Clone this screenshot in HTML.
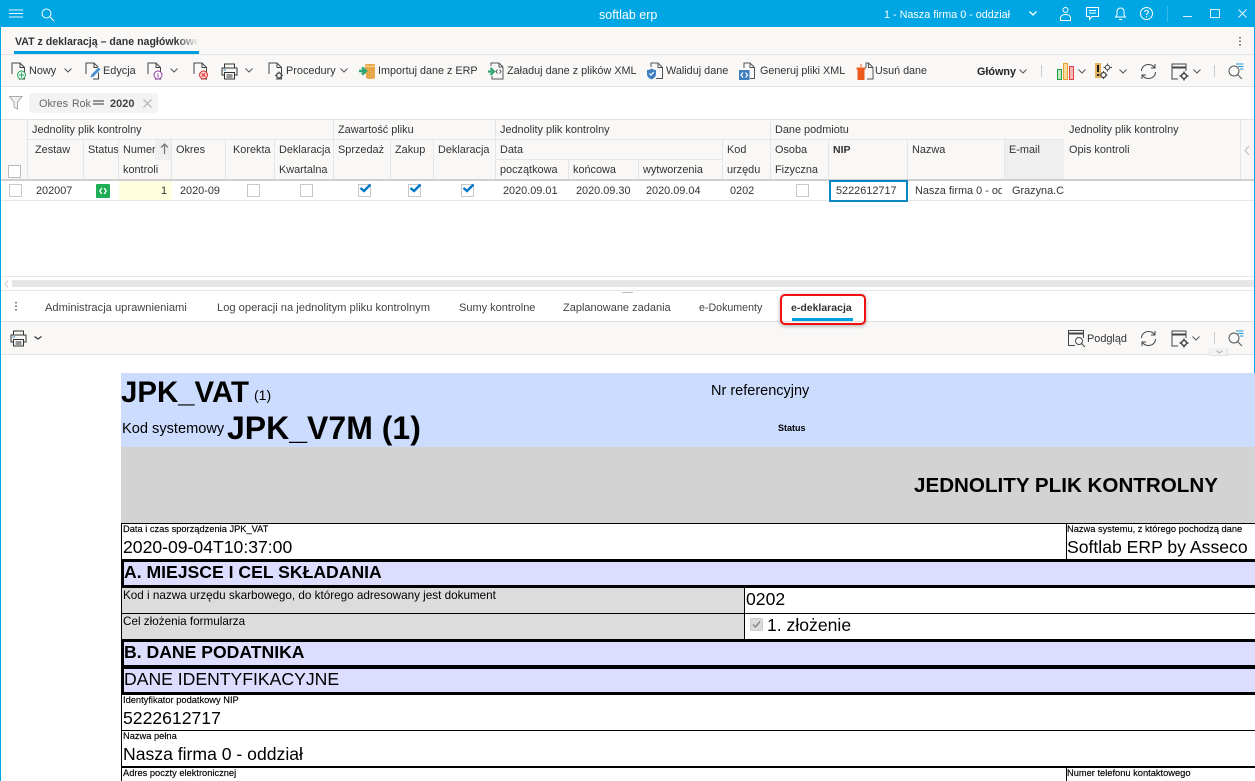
<!DOCTYPE html>
<html lang="pl"><head><meta charset="utf-8"><title>softlab erp</title>
<style>
html,body{margin:0;padding:0;width:1255px;height:781px;overflow:hidden;background:#fff}
body{position:relative;font-family:"Liberation Sans",sans-serif;font-size:10.900px;color:#333}
.a,.t,.x,svg{position:absolute}
.t{white-space:nowrap;line-height:14px;margin-top:1px}
.x{white-space:nowrap;font-family:"Liberation Sans",sans-serif;color:#000}
.s{font-size:9.300px;line-height:11px;-webkit-text-stroke:.15px #000}
.v{font-size:17.600px;line-height:21px}
.h{font-size:11.150px;color:#444;top:0}
.cb{position:absolute;width:11px;height:11px;border:1px solid #c8c8c8;background:#fff}
.tick{position:absolute;width:11px;height:11px;border:1px solid #c8c8c8;background:#fff}
.tick svg{left:0;top:-3px}
svg{overflow:visible;fill:none}
.vl{position:absolute;width:1px;background:#e6e6e6}
.hl{position:absolute;height:1px;background:#e6e6e6}
.bk{position:absolute;background:#000}
</style></head><body>

<svg width="0" height="0" style="position:absolute">
<defs>
<symbol id="doc" viewBox="0 0 16 18" overflow="visible"><path d="M1 12V1H9L13.5 5.5V17H8M9 1V5.5H13.5" stroke="#444" fill="none"/></symbol>
<symbol id="chev" viewBox="0 0 8 5" overflow="visible"><path d="M.5.5L4 4L7.500.5" stroke="#555" fill="none"/></symbol>
<symbol id="prn" viewBox="0 0 17 17" overflow="visible"><path d="M3.500 5V1H13.500V5M3.500 12H1V5H16V12H13.500M3.500 9.500H13.500V16H3.500Z" stroke="#333" fill="none"/><path d="M5.500 12H11.500M5.500 14H11.500" stroke="#333"/><path d="M2.500 7H5" stroke="#1e88c9"/></symbol>
<symbol id="ref" viewBox="0 0 17 17" overflow="visible"><path d="M1.500 8C1.500 4 5 1.500 8.500 1.500C11 1.500 13 2.500 14.500 4.500M15.500 9C15.500 13 12 15.500 8.500 15.500C6 15.500 4 14.500 2.500 12.500" stroke="#444" fill="none"/><path d="M15 1V5H11M2 16V12H6" stroke="#444" fill="none"/></symbol>
<symbol id="win" viewBox="0 0 20 18" overflow="visible"><path d="M7 16H1V1H15V8" stroke="#444" fill="none"/><path d="M1 4.500H15" stroke="#444" stroke-width="2"/><circle cx="13" cy="13" r="2.500" stroke="#444" stroke-width="1.500" fill="none"/><path d="M13 8.500V10M13 16V17.500M8.500 13H10M16 13H17.500" stroke="#444" stroke-width="1.500"/></symbol>
<symbol id="sea" viewBox="0 0 16 16" overflow="visible"><circle cx="6" cy="8" r="5" stroke="#555" fill="none"/><path d="M9.500 11.500L14 16" stroke="#555"/><path d="M8 1H15.500M10 3.500H15.500M12 6H15.500" stroke="#1e9ad6"/></symbol>
</defs></svg>

<!-- title bar -->
<div class="a" style="left:0;top:0;width:1255px;height:27px;background:#00a5e3"></div>
<div class="a" style="left:0;top:27px;width:1px;height:754px;background:#00a5e3"></div>
<div class="a" style="left:1254px;top:27px;width:1px;height:346px;background:#00a5e3"></div>
<svg style="left:9px;top:9px" width="15" height="10"><path d="M0 1H14M0 4.500H14M0 8H14" stroke="#e8f7fd"/></svg>
<svg style="left:41px;top:8px" width="14" height="14"><circle cx="5.500" cy="5.500" r="4.500" stroke="#fff"/><path d="M9 9L13 13" stroke="#fff"/></svg>
<div class="t" style="left:599px;top:7px;color:#fff;font-size:12.500px">softlab erp</div>
<div class="t" style="left:884px;top:7px;color:#fff;font-size:10.800px">1 - Nasza firma 0 - oddział</div>
<svg style="left:1029px;top:11px" width="8" height="5"><path d="M.5.500L4 4L7.500.500" stroke="#fff" stroke-width="1.300"/></svg>
<svg style="left:1060px;top:7px" width="11" height="14"><circle cx="5.500" cy="3" r="2.500" stroke="#fff"/><path d="M.5 13.500V11C.5 8.500 3 7.500 5.500 7.500S10.500 8.500 10.500 11V13.500Z" stroke="#fff"/></svg>
<svg style="left:1086px;top:7px" width="13" height="14"><path d="M.5.500H12.500V9.500H6L3.500 12.500V9.500H.5ZM3 3.500H10M3 6H10" stroke="#fff"/></svg>
<svg style="left:1115px;top:7px" width="11" height="14"><path d="M.5 10H10.500L9 8V4.500C9 2.500 7.500 1 5.500 1S2 2.500 2 4.500V8ZM4 12.500H7" stroke="#fff"/></svg>
<svg style="left:1140px;top:7px" width="14" height="14"><circle cx="6.500" cy="6.500" r="6" stroke="#fff"/><path d="M4.700 5C4.700 3 8.500 3 8.500 5C8.500 6.300 6.500 6.300 6.500 8M6.500 9.300V10.500" stroke="#fff"/></svg>
<div class="a" style="left:1167px;top:6px;width:1px;height:16px;background:#35b8ea"></div>
<div class="a" style="left:1183px;top:16px;width:9px;height:1px;background:#d9f2fb"></div>
<div class="a" style="left:1210px;top:9px;width:8px;height:7px;border:1px solid #d9f2fb"></div>
<svg style="left:1238px;top:9px" width="9" height="9"><path d="M.5.500L8.500 8.500M8.500.500L.5 8.500" stroke="#e8f7fd"/></svg>

<!-- tab row -->
<div class="a" style="left:1px;top:27px;width:1253px;height:27px;background:#f9f8f7"></div>
<div class="hl" style="left:1px;top:54px;width:1253px;background:#e3e3e3"></div>
<div class="t" style="left:15px;top:34px;width:184px;overflow:hidden;font-weight:bold;font-size:10.600px;color:#333">VAT z deklaracją – dane nagłówkowe</div>
<div class="a" style="left:176px;top:34px;width:23px;height:15px;background:linear-gradient(90deg,rgba(249,248,247,0),#f9f8f7)"></div>
<div class="a" style="left:14px;top:51px;width:185px;height:3px;background:#00a0e0"></div>
<svg style="left:1238px;top:36px" width="4" height="11"><path d="M2 1V2.500M2 4.500V6M2 8V9.500" stroke="#555" stroke-width="1.500"/></svg>

<!-- toolbar -->
<div class="a" style="left:1px;top:55px;width:1253px;height:31px;background:#f9f8f7"></div>
<div class="hl" style="left:1px;top:86px;width:1253px;background:#e3e3e3"></div>
<svg style="left:11px;top:62px" width="16" height="18"><use href="#doc" width="16" height="18"/><circle cx="10.500" cy="13" r="4" stroke="#27a85a" fill="#f2fbf5"/><path d="M10.500 10.500V15.500M8 13H13" stroke="#27a85a"/></svg>
<div class="t" style="left:29px;top:63px">Nowy</div>
<svg style="left:64px;top:68px" width="8" height="5"><use href="#chev" width="8" height="5"/></svg>
<svg style="left:85px;top:62px" width="17" height="18"><use href="#doc" width="16" height="18"/><path d="M5 16L6 12.500L13.500 5L16 7.500L8.500 15Z" fill="#4a90d0" stroke="#fff" stroke-width=".6"/></svg>
<div class="t" style="left:103px;top:63px">Edycja</div>
<svg style="left:147px;top:62px" width="16" height="18"><use href="#doc" width="16" height="18"/><circle cx="11" cy="13" r="4" stroke="#a040b0" fill="#f9f8f7"/><path d="M11 11V11.800M11 12.500V15.500" stroke="#a040b0"/></svg>
<svg style="left:170px;top:68px" width="8" height="5"><use href="#chev" width="8" height="5"/></svg>
<svg style="left:193px;top:62px" width="16" height="18"><use href="#doc" width="16" height="18"/><circle cx="10.500" cy="13" r="4" stroke="#e03030" fill="#f7c8c8"/><path d="M8.800 11.300L12.200 14.700M12.200 11.300L8.800 14.700" stroke="#e03030"/></svg>
<svg style="left:221px;top:63px" width="17" height="17"><use href="#prn" width="17" height="17"/></svg>
<svg style="left:245px;top:68px" width="8" height="5"><use href="#chev" width="8" height="5"/></svg>
<svg style="left:268px;top:62px" width="16" height="18"><use href="#doc" width="16" height="18"/><circle cx="11" cy="13.500" r="2.500" stroke="#555" stroke-width="1.500" fill="#f9f8f7"/><path d="M11 9.500V11M11 16V17.500M7 13.500H8.500M13.500 13.500H15" stroke="#555" stroke-width="1.300"/></svg>
<div class="t" style="left:286px;top:63px">Procedury</div>
<svg style="left:340px;top:68px" width="8" height="5"><use href="#chev" width="8" height="5"/></svg>
<svg style="left:359px;top:62px" width="17" height="18"><path d="M6 2H16V16C14 17.500 9 17.500 7 16V12H6" fill="#e8a84a"/><path d="M6 3.500C9 5 13 5 16 3.500" stroke="#f7d9a0"/><path d="M0 9H5M3 5.500L7 9L3 12.500" stroke="#2fa572" stroke-width="2.500"/></svg>
<div class="t" style="left:378px;top:63px;font-size:10.800px">Importuj dane z ERP</div>
<svg style="left:488px;top:62px" width="16" height="18"><path d="M3 4V1H11L15 5V17H4V14M11 1V5H15" stroke="#555"/><path d="M0 9.500H4M2.500 6L6 9.500L2.500 13" stroke="#2fa572" stroke-width="2.200"/><path d="M9.500 7.500L8 9.500L9.500 11.500M11.500 7.500L13 9.500L11.500 11.500" stroke="#555"/></svg>
<div class="t" style="left:507px;top:63px;font-size:10.850px">Załaduj dane z plików XML</div>
<svg style="left:647px;top:62px" width="17" height="18"><path d="M4 5V1H11L15.500 5.500V16.500H9M11 1V5.500H15.500" stroke="#555"/><path d="M0 8C2 8 3 7.500 4.500 6.500C6 7.500 7 8 9 8V12C9 15 6.500 16.500 4.500 17.500C2.500 16.500 0 15 0 12Z" fill="#3f7fc0"/><path d="M2.500 11.500L4 13L6.800 10" stroke="#fff" stroke-width="1.200"/></svg>
<div class="t" style="left:666px;top:63px;font-size:10.850px">Waliduj dane</div>
<svg style="left:739px;top:62px" width="17" height="18"><path d="M5 6V1H11L15.500 5.500V16.500H11M11 1V5.500H15.500" stroke="#555"/><rect x="0" y="8" width="10.500" height="10" fill="#3f7fc0"/><path d="M4 10.500L2 13L4 15.500M6.500 10.500L8.500 13L6.500 15.500" stroke="#fff" stroke-width="1.200"/></svg>
<div class="t" style="left:760px;top:63px;font-size:10.800px">Generuj pliki XML</div>
<svg style="left:856px;top:62px" width="18" height="18"><path d="M10 6V1H12.500L17 5.500V17H11M12.500 1V5.500H17" stroke="#555"/><rect x="1.500" y="7" width="7" height="11" fill="#ee5a1e"/><rect x=".5" y="5.500" width="9" height="2" fill="#ee5a1e"/><rect x="4.500" y="2" width="1" height="3" fill="#ee5a1e"/></svg>
<div class="t" style="left:875px;top:63px;font-size:10.750px">Usuń dane</div>
<div class="t" style="left:977px;top:64px;font-weight:bold;font-size:10.800px;color:#222">Główny</div>
<svg style="left:1019px;top:69px" width="8" height="5"><use href="#chev" width="8" height="5"/></svg>
<div class="vl" style="left:1041px;top:65px;height:12px;background:#ccc"></div>
<svg style="left:1057px;top:63px" width="17" height="17"><rect x=".5" y="6.500" width="4" height="10" fill="#c6e6c6" stroke="#20a040"/><rect x="6.500" y=".5" width="4" height="16" fill="#f9dca0" stroke="#e8a030"/><rect x="12.500" y="3.500" width="4" height="13" fill="#f4b8b8" stroke="#e04040"/></svg>
<svg style="left:1078px;top:69px" width="8" height="5"><use href="#chev" width="8" height="5"/></svg>
<svg style="left:1095px;top:63px" width="18" height="17"><rect x="0" y="0" width="6" height="15" fill="#e3b25e"/><path d="M3 2V9M3 11V13" stroke="#222" stroke-width="2"/><circle cx="12.500" cy="4.500" r="2.200" stroke="#444"/><path d="M12.500 .5V2M12.500 7V8.500M8.500 4.500H10M15 4.500H17" stroke="#444"/><circle cx="8.500" cy="12" r="2.500" stroke="#444" stroke-width="1.300"/><path d="M8.500 8V9.500M8.500 14.500V16M4.500 12H6M11 12H12.500" stroke="#444"/></svg>
<svg style="left:1119px;top:69px" width="8" height="5"><use href="#chev" width="8" height="5"/></svg>
<svg style="left:1140px;top:63px" width="17" height="17"><use href="#ref" width="17" height="17"/></svg>
<svg style="left:1171px;top:63px" width="20" height="18"><use href="#win" width="20" height="18"/></svg>
<svg style="left:1193px;top:69px" width="8" height="5"><use href="#chev" width="8" height="5"/></svg>
<div class="vl" style="left:1214px;top:65px;height:12px;background:#ccc"></div>
<svg style="left:1228px;top:63px" width="16" height="16"><use href="#sea" width="16" height="16"/></svg>

<!-- filter -->
<svg style="left:9px;top:96px" width="14" height="14"><path d="M.5.500H13L8.500 6V13L5 11V6Z" stroke="#aaa" fill="#f2f2f2"/></svg>
<div class="a" style="left:29px;top:93px;width:129px;height:20px;background:#f3f3f3;border-radius:3px"></div>
<div class="t" style="left:39px;top:96px;color:#666">Okres</div>
<div class="t" style="left:72px;top:96px;color:#666;font-size:10.600px">Rok</div>
<svg style="left:93px;top:100px" width="12" height="6"><path d="M0 1H11M0 4H11" stroke="#333"/></svg>
<div class="t" style="left:110px;top:96px;font-weight:bold;font-size:11px;color:#444">2020</div>
<svg style="left:143px;top:99px" width="9" height="9"><path d="M.5.500L8.500 8.500M8.500.500L.5 8.500" stroke="#aaa"/></svg>
<div class="hl" style="left:1px;top:119px;width:1253px;background:#e3e3e3"></div>

<!-- grid header -->
<div class="a" style="left:1px;top:120px;width:1253px;height:59px;background:#f9f8f7"></div>
<div class="a" style="left:1004px;top:140px;width:60px;height:39px;background:#efefef"></div>
<div class="a" style="left:155px;top:140px;width:17px;height:20px;background:#efefef"></div>
<div class="hl" style="left:1px;top:179px;width:1253px;height:2px;background:#cfcfcf"></div>
<div class="hl" style="left:28px;top:139px;width:1036px"></div>
<div class="hl" style="left:496px;top:159px;width:226px"></div>
<div class="vl" style="left:27px;top:120px;height:59px"></div>
<div class="vl" style="left:83px;top:140px;height:39px"></div>
<div class="vl" style="left:118px;top:140px;height:39px"></div>
<div class="vl" style="left:171px;top:140px;height:39px"></div>
<div class="vl" style="left:225px;top:140px;height:39px"></div>
<div class="vl" style="left:274px;top:140px;height:39px"></div>
<div class="vl" style="left:333px;top:120px;height:59px"></div>
<div class="vl" style="left:390px;top:140px;height:39px"></div>
<div class="vl" style="left:433px;top:140px;height:39px"></div>
<div class="vl" style="left:495px;top:120px;height:59px"></div>
<div class="vl" style="left:568px;top:160px;height:19px"></div>
<div class="vl" style="left:638px;top:160px;height:19px"></div>
<div class="vl" style="left:722px;top:140px;height:39px"></div>
<div class="vl" style="left:770px;top:120px;height:59px"></div>
<div class="vl" style="left:828px;top:140px;height:39px"></div>
<div class="vl" style="left:907px;top:140px;height:39px"></div>
<div class="vl" style="left:1004px;top:140px;height:39px"></div>
<div class="vl" style="left:1240px;top:120px;height:59px"></div>
<div class="a" style="left:8px;top:165px;width:11px;height:11px;border:1px solid #bbb;background:#fff"></div>

<div class="t" style="left:32px;top:122px">Jednolity plik kontrolny</div>
<div class="t" style="left:338px;top:122px">Zawartość pliku</div>
<div class="t" style="left:500px;top:122px">Jednolity plik kontrolny</div>
<div class="t" style="left:775px;top:122px">Dane podmiotu</div>
<div class="t" style="left:1069px;top:122px">Jednolity plik kontrolny</div>
<div class="t" style="left:35px;top:142px">Zestaw</div>
<div class="t" style="left:88px;top:142px;width:30px;overflow:hidden">Status</div>
<div class="t" style="left:123px;top:142px;width:32px;overflow:hidden">Numer</div>
<svg style="left:160px;top:143px" width="9" height="11"><path d="M4.500 11V1M1 4.500L4.500 1L8 4.500" stroke="#777" stroke-width="1.300"/></svg>
<div class="t" style="left:123px;top:162px">kontroli</div>
<div class="t" style="left:176px;top:142px">Okres</div>
<div class="t" style="left:233px;top:142px">Korekta</div>
<div class="t" style="left:279px;top:142px">Deklaracja</div>
<div class="t" style="left:279px;top:162px">Kwartalna</div>
<div class="t" style="left:338px;top:142px">Sprzedaż</div>
<div class="t" style="left:395px;top:142px">Zakup</div>
<div class="t" style="left:438px;top:142px">Deklaracja</div>
<div class="t" style="left:500px;top:142px">Data</div>
<div class="t" style="left:500px;top:162px">początkowa</div>
<div class="t" style="left:573px;top:162px">końcowa</div>
<div class="t" style="left:643px;top:162px">wytworzenia</div>
<div class="t" style="left:727px;top:142px">Kod</div>
<div class="t" style="left:727px;top:162px">urzędu</div>
<div class="t" style="left:775px;top:142px">Osoba</div>
<div class="t" style="left:775px;top:162px">Fizyczna</div>
<div class="t" style="left:833px;top:142px;font-weight:bold;font-size:10.500px">NIP</div>
<div class="t" style="left:912px;top:142px">Nazwa</div>
<div class="t" style="left:1009px;top:142px">E-mail</div>
<div class="t" style="left:1069px;top:142px">Opis kontroli</div>
<svg style="left:1244px;top:145px" width="6" height="11"><path d="M5 1L1 5.500L5 10" stroke="#bbb"/></svg>

<!-- grid row -->
<div class="a" style="left:119px;top:181px;width:53px;height:19px;background:#ffffe0"></div>
<div class="hl" style="left:1px;top:200px;width:1253px"></div>
<div class="cb" style="left:9px;top:184px"></div>
<div class="t" style="left:36px;top:183px">202007</div>
<div class="a" style="left:96px;top:184px;width:14px;height:14px;background:#1fae56;border-radius:1px"></div>
<svg style="left:99px;top:187px" width="8" height="8"><path d="M2.800 1L.8 4L2.800 7M5.200 1L7.200 4L5.200 7" stroke="#fff" stroke-width="1.300"/></svg>
<div class="t" style="left:161px;top:183px">1</div>
<div class="t" style="left:180px;top:183px">2020-09</div>
<div class="cb" style="left:247px;top:184px"></div>
<div class="cb" style="left:300px;top:184px"></div>
<div class="tick" style="left:358px;top:184px"><svg width="13" height="11"><path d="M1.500 6L5 9L11.500 2.500" stroke="#0078c8" stroke-width="2.400"/></svg></div>
<div class="tick" style="left:408px;top:184px"><svg width="13" height="11"><path d="M1.500 6L5 9L11.500 2.500" stroke="#0078c8" stroke-width="2.400"/></svg></div>
<div class="tick" style="left:461px;top:184px"><svg width="13" height="11"><path d="M1.500 6L5 9L11.500 2.500" stroke="#0078c8" stroke-width="2.400"/></svg></div>
<div class="t" style="left:503px;top:183px">2020.09.01</div>
<div class="t" style="left:576px;top:183px">2020.09.30</div>
<div class="t" style="left:646px;top:183px">2020.09.04</div>
<div class="t" style="left:730px;top:183px">0202</div>
<div class="cb" style="left:796px;top:184px"></div>
<div class="a" style="left:829px;top:180px;width:75px;height:18px;border:2px solid #0d86c4;background:#fff"></div>
<div class="t" style="left:836px;top:183px">5222612717</div>
<div class="t" style="left:915px;top:183px;width:87px;overflow:hidden">Nasza firma 0 - oddział</div>
<div class="t" style="left:1012px;top:183px;width:52px;overflow:hidden">Grazyna.C</div>

<!-- scrollbar -->
<div class="hl" style="left:1px;top:276px;width:1253px"></div>
<svg style="left:4px;top:280px" width="5" height="8"><path d="M4 .5L1 4L4 7.500" stroke="#ccc"/></svg>
<div class="a" style="left:12px;top:280px;width:1242px;height:7px;background:#e6e6e6"></div>
<div class="hl" style="left:1px;top:290px;width:1253px"></div>
<div class="a" style="left:622px;top:292px;width:11px;height:1px;background:#bbb"></div>

<!-- lower tabs -->
<svg style="left:14px;top:301px" width="4" height="11"><path d="M2 1V2.500M2 4.500V6M2 8V9.500" stroke="#555" stroke-width="1.500"/></svg>
<div class="t h" style="left:45px;top:300px">Administracja uprawnieniami</div>
<div class="t h" style="left:217px;top:300px">Log operacji na jednolitym pliku kontrolnym</div>
<div class="t h" style="left:459px;top:300px;font-size:11px">Sumy kontrolne</div>
<div class="t h" style="left:563px;top:300px;font-size:11px">Zaplanowane zadania</div>
<div class="t h" style="left:699px;top:300px;font-size:10.650px">e-Dokumenty</div>
<div class="t" style="left:791px;top:300px;font-weight:bold;font-size:10.500px;color:#333">e-deklaracja</div>
<div class="a" style="left:792px;top:318px;width:61px;height:3px;background:#00a0e0"></div>
<div class="hl" style="left:1px;top:321px;width:1253px;background:#e0e0e0"></div>
<div class="a" style="left:1px;top:322px;width:1253px;height:32px;background:#f9f8f7"></div>
<div class="hl" style="left:1px;top:354px;width:1253px;background:#e3e3e3"></div>
<div class="a" style="left:780px;top:294px;width:82px;height:27px;border:2px solid #f01010;border-radius:5px;box-shadow:0 1px 4px rgba(0,0,0,.3)"></div>

<!-- lower toolbar -->
<svg style="left:10px;top:330px" width="17" height="17"><use href="#prn" width="17" height="17"/></svg>
<svg style="left:34px;top:336px" width="8" height="4"><path d="M.5.5L4 3L7.500.5" stroke="#333" stroke-width="1.200"/></svg>
<svg style="left:1068px;top:330px" width="18" height="17"><path d="M7 15.500H.5V.5H15.500V8" stroke="#444"/><path d="M.5 3.500H15.500" stroke="#444" stroke-width="2"/><circle cx="11" cy="11" r="3.500" stroke="#444"/><path d="M13.500 13.500L17 17" stroke="#444"/></svg>
<div class="t" style="left:1087px;top:331px">Podgląd</div>
<svg style="left:1140px;top:330px" width="17" height="17"><use href="#ref" width="17" height="17"/></svg>
<svg style="left:1171px;top:330px" width="20" height="18"><use href="#win" width="20" height="18"/></svg>
<svg style="left:1192px;top:336px" width="8" height="5"><use href="#chev" width="8" height="5"/></svg>
<div class="vl" style="left:1214px;top:332px;height:12px;background:#ccc"></div>
<svg style="left:1228px;top:330px" width="16" height="16"><use href="#sea" width="16" height="16"/></svg>
<div class="a" style="left:1209px;top:348px;width:19px;height:8px;background:#f3f3f3;border:1px solid #e3e3e3;border-top:1px solid #eee;box-sizing:border-box"></div>
<svg style="left:1216px;top:350px" width="7" height="4"><path d="M.5.5L3.500 3L6.500.5" stroke="#aaa"/></svg>

<!-- form -->
<div class="a" style="left:121px;top:373px;width:1134px;height:74px;background:#ccdcff"></div>
<div class="a" style="left:121px;top:447px;width:1134px;height:76px;background:#d3d3d3"></div>
<div class="x" style="left:121px;top:376px;font-size:29.400px;font-weight:bold;line-height:33px">JPK_VAT</div>
<div class="x" style="left:254px;top:387px;font-size:14px;line-height:16px">(1)</div>
<div class="x" style="left:711px;top:383px;font-size:14.500px;line-height:16px">Nr referencyjny</div>
<div class="x" style="left:122px;top:421px;font-size:14.600px;line-height:16px">Kod systemowy</div>
<div class="x" style="left:227px;top:412px;font-size:32px;font-weight:bold;line-height:33px">JPK_V7M (1)</div>
<div class="x" style="left:778px;top:423px;font-size:9px;font-weight:bold;line-height:11px">Status</div>
<div class="x" style="left:914px;top:474px;font-size:20.600px;font-weight:bold;line-height:23px">JEDNOLITY PLIK KONTROLNY</div>

<div class="bk" style="left:121px;top:523px;width:1134px;height:1px"></div>
<div class="bk" style="left:121px;top:524px;width:1px;height:257px"></div>
<div class="bk" style="left:1066px;top:524px;width:1px;height:36px"></div>
<div class="x s" style="left:123px;top:524px">Data i czas sporządzenia JPK_VAT</div>
<div class="x v" style="left:123px;top:537px">2020-09-04T10:37:00</div>
<div class="x s" style="left:1067px;top:524px">Nazwa systemu, z którego pochodzą dane</div>
<div class="x v" style="left:1067px;top:537px">Softlab ERP by Asseco</div>

<div class="bk" style="left:121px;top:559px;width:1134px;height:3px"></div>
<div class="a" style="left:124px;top:562px;width:1131px;height:23px;background:#ddf"></div>
<div class="bk" style="left:121px;top:562px;width:3px;height:23px"></div>
<div class="x" style="left:124px;top:562px;font-size:17.600px;font-weight:bold;line-height:21px">A. MIEJSCE I CEL SKŁADANIA</div>
<div class="bk" style="left:121px;top:585px;width:1134px;height:3px"></div>

<div class="a" style="left:122px;top:588px;width:622px;height:51px;background:#dcdcdc"></div>
<div class="bk" style="left:744px;top:588px;width:1px;height:51px"></div>
<div class="bk" style="left:122px;top:613px;width:1133px;height:1px"></div>
<div class="x" style="left:123px;top:589px;font-size:11.700px;line-height:14px">Kod i nazwa urzędu skarbowego, do którego adresowany jest dokument</div>
<div class="x" style="left:123px;top:615px;font-size:11.700px;line-height:14px">Cel złożenia formularza</div>
<div class="x v" style="left:746px;top:589px">0202</div>
<div class="a" style="left:750px;top:618px;width:11px;height:11px;background:#dcdcdc;border:1px solid #ccc;border-radius:2px"></div>
<svg style="left:752px;top:620px" width="9" height="9"><path d="M1 4.500L3.500 7L8 1.500" stroke="#8a8a8a" stroke-width="1.500"/></svg>
<div class="x v" style="left:767px;top:615px">1. złożenie</div>

<div class="bk" style="left:121px;top:639px;width:1134px;height:3px"></div>
<div class="a" style="left:124px;top:642px;width:1131px;height:23px;background:#ddf"></div>
<div class="bk" style="left:121px;top:642px;width:3px;height:23px"></div>
<div class="x" style="left:124px;top:642px;font-size:17.600px;font-weight:bold;line-height:21px">B. DANE PODATNIKA</div>
<div class="bk" style="left:121px;top:665px;width:1134px;height:4px"></div>
<div class="a" style="left:124px;top:669px;width:1131px;height:23px;background:#ddf"></div>
<div class="bk" style="left:121px;top:669px;width:3px;height:23px"></div>
<div class="x" style="left:124px;top:669px;font-size:17.600px;line-height:21px">DANE IDENTYFIKACYJNE</div>
<div class="bk" style="left:121px;top:692px;width:1134px;height:3px"></div>

<div class="x s" style="left:123px;top:695px">Identyfikator podatkowy NIP</div>
<div class="x v" style="left:123px;top:708px">5222612717</div>
<div class="bk" style="left:121px;top:730px;width:1134px;height:1px"></div>
<div class="x s" style="left:123px;top:731px">Nazwa pełna</div>
<div class="x v" style="left:123px;top:744px">Nasza firma 0 - oddział</div>
<div class="bk" style="left:121px;top:766px;width:1134px;height:2px"></div>
<div class="x s" style="left:123px;top:768px">Adres poczty elektronicznej</div>
<div class="bk" style="left:1066px;top:768px;width:1px;height:13px"></div>
<div class="x s" style="left:1067px;top:768px">Numer telefonu kontaktowego</div>

</body></html>
